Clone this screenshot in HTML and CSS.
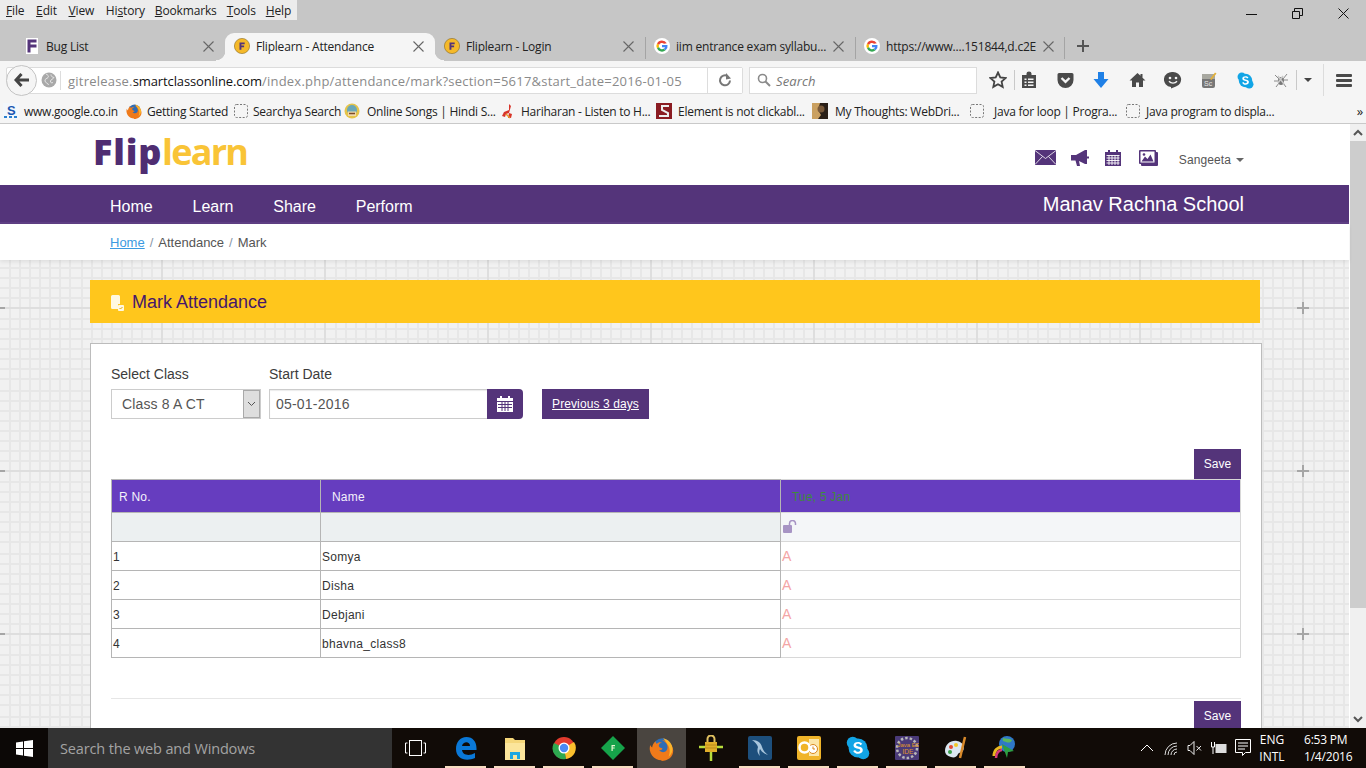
FILE: index.html
```html
<!DOCTYPE html>
<html>
<head>
  <meta charset="UTF-8">
  <title>Fliplearn - Attendance</title>
  <link rel="stylesheet" href="styles.css">
</head>
<body>
  <svg class="sprites" width="0" height="0">
    <defs>
      <symbol id="i-x" viewBox="0 0 11 11">
        <path d="M.5.500l10 10M10.500.500l-10 10" stroke="#666" stroke-width="1.100" fill="none"/>
      </symbol>
      <symbol id="i-f" viewBox="0 0 16 16">
        <circle cx="8" cy="8" r="7.600" fill="#f5b92a" stroke="#8a6a1c" stroke-width=".6"/>
        <path d="M5.500 4.500h5.200v1.800H7.400v1.300h2.700v1.700H7.400v2.400H5.500z" fill="#54347a"/>
      </symbol>
      <symbol id="i-g" viewBox="0 0 16 16">
        <circle cx="8" cy="8" r="8" fill="#fff"/>
        <path d="M12.800 5.200A5.600 5.600 0 0 0 3 5.400l2 1.500a3.200 3.200 0 0 1 5-1.200z" fill="#ea4335"/>
        <path d="M3 5.400a5.600 5.600 0 0 0 0 5.200l2-1.500a3.200 3.200 0 0 1 0-2.200z" fill="#fbbc05"/>
        <path d="M3 10.600a5.600 5.600 0 0 0 8.600 1.700L9.700 10.800A3.200 3.200 0 0 1 5 9.100z" fill="#34a853"/>
        <path d="M11.600 12.300A5.600 5.600 0 0 0 13.500 7H8v2.200h3a2.600 2.600 0 0 1-1.300 1.600z" fill="#4285f4"/>
      </symbol>
      <symbol id="i-dash" viewBox="0 0 16 16">
        <rect x="1.500" y="1.500" width="13" height="13" rx="2" fill="none" stroke="#777" stroke-dasharray="2 1.500"/>
      </symbol>
      <symbol id="i-fox" viewBox="0 0 16 16">
        <circle cx="8.500" cy="7.500" r="6" fill="#2f6db5"/>
        <path d="M8 15.500A7.500 7.500 0 0 1 .8 5.800c.3.800.7 1.300 1.200 1.600C2.200 5.800 3 4.300 4.300 3.300c-.1.800.1 1.300.6 1.700C6 3.800 7.300 3.700 8.400 4.300 7.200 4.400 6 5.200 6.300 6.500c.3 1 1.700.9 2.300 1.500-.2 1-1.300 1.200-2 1 .9 1.600 3.400 1.800 4.600.3 1-1.400.8-3.400-.3-4.800-.6-.8-1.600-1.700-2.900-2 3.300.1 7.500 2.700 7.500 7 0 4-3.400 6.500-7.500 6.500z" fill="#ef7a1a"/>
        <path d="M9 1.500c3 .6 5.500 2.800 6 6 .3 2.600-1 4.600-2.500 5.800 1.300-3 .9-5.800-.9-8.300C10.800 3.800 10 2.500 9 1.500z" fill="#fcb42a"/>
      </symbol>
      <symbol id="i-skype" viewBox="0 0 16 16">
        <circle cx="4.500" cy="4.500" r="4" fill="#12a5e6"/>
        <circle cx="11.500" cy="11.500" r="4" fill="#12a5e6"/>
        <circle cx="8" cy="8" r="6.300" fill="#12a5e6"/>
        <path d="M10.800 5.400C10.200 4.300 9 4 8 4 6.400 4 5 4.800 5 6.200c0 2.900 4.500 1.700 4.500 3.300 0 .6-.7 1-1.500 1-1 0-1.500-.4-1.900-1.200l-1.300.7c.6 1.200 1.800 1.900 3.300 1.900 1.700 0 3.100-.8 3.100-2.500 0-3-4.500-1.900-4.500-3.400 0-.5.600-.8 1.300-.8.800 0 1.200.3 1.500.9z" fill="#fff"/>
      </symbol>
    </defs>
  </svg>

  <header class="browser">
    <div class="title-row">
      <nav class="menu-bar">
        <span><u>F</u>ile</span><span><u>E</u>dit</span><span><u>V</u>iew</span><span>Hi<u>s</u>tory</span><span><u>B</u>ookmarks</span><span><u>T</u>ools</span><span><u>H</u>elp</span>
      </nav>
      <div class="win-controls">
        <svg width="11" height="11" viewBox="0 0 11 11"><path d="M0 6.500h11" stroke="#111" fill="none"/></svg>
        <svg width="11" height="11" viewBox="0 0 11 11"><path d="M.5 3.500h7v7h-7zM2.500 3.500v-3h8v7h-3" stroke="#111" fill="none"/></svg>
        <svg width="11" height="11" viewBox="0 0 11 11"><path d="M.5.500l10 10M10.500.500l-10 10" stroke="#111" fill="none"/></svg>
      </div>
    </div>

    <div class="tab-row">
      <div class="tab">
        <svg class="fav" viewBox="0 0 16 16"><rect x="2" width="12" height="16" fill="#fff"/><path d="M3.500 1.500h9v3H6.500v2h6v3h-6v5h-3z" fill="#54347a"/></svg>
        <span class="tab-title">Bug List</span><svg class="tab-close"><use href="#i-x"/></svg>
      </div>
      <div class="tab tab-active">
        <svg class="fav"><use href="#i-f"/></svg>
        <span class="tab-title">Fliplearn - Attendance</span><svg class="tab-close"><use href="#i-x"/></svg>
      </div>
      <div class="tab tab-sep">
        <svg class="fav"><use href="#i-f"/></svg>
        <span class="tab-title">Fliplearn - Login</span><svg class="tab-close"><use href="#i-x"/></svg>
      </div>
      <div class="tab tab-sep">
        <svg class="fav"><use href="#i-g"/></svg>
        <span class="tab-title">iim entrance exam syllabu...</span><svg class="tab-close"><use href="#i-x"/></svg>
      </div>
      <div class="tab tab-sep">
        <svg class="fav"><use href="#i-g"/></svg>
        <span class="tab-title">https://www....151844,d.c2E</span><svg class="tab-close"><use href="#i-x"/></svg>
      </div>
      <svg class="new-tab" width="14" height="14" viewBox="0 0 14 14"><path d="M7 1v12M1 7h12" stroke="#555" stroke-width="2" fill="none"/></svg>
    </div>

    <div class="nav-row">
      <div class="url-bar">
        <span class="back-btn">
          <svg width="16" height="14" viewBox="0 0 16 14"><path d="M7.500 1L2 7l5.500 6M2.500 7H15" stroke="#444" stroke-width="3" fill="none"/></svg>
        </span>
        <svg class="globe" width="16" height="16" viewBox="0 0 16 16"><circle cx="8" cy="8" r="7.500" fill="#a9a9a9"/><path d="M5 2c2 1 3 2 2 3.500S3.500 6.500 4 9s3 1.500 3.500 4M10 2.500c0 2 1 2.500 3 3-1 2-3 1.500-3.500 3.500s1.500 2 2.500 1.500" stroke="#e6e6e6" fill="none"/></svg>
        <span class="url"><span class="url-dim">gitrelease.</span><span class="url-host">smartclassonline.com</span><span class="url-dim">/index.php/attendance/mark?section=5617&amp;start_date=2016-01-05</span></span>
        <span class="reload">
          <svg width="14" height="14" viewBox="0 0 14 14"><path d="M12 7.500A5 5 0 1 1 9.500 3" stroke="#777" stroke-width="2" fill="none"/><path d="M8 0v6.500l5-1z" fill="#777"/></svg>
        </span>
      </div>
      <div class="search-bar">
        <svg width="14" height="14" viewBox="0 0 14 14"><circle cx="5.500" cy="5.500" r="4" stroke="#8a8a8a" stroke-width="1.600" fill="none"/><path d="M8.500 8.500l4.500 4.500" stroke="#8a8a8a" stroke-width="2"/></svg>
        <span class="search-label">Search</span>
      </div>
      <div class="tools">
        <span class="tool"><svg width="18" height="18" viewBox="0 0 18 18"><path d="M9 1.500l2.300 5 5.200.6-3.900 3.500 1.100 5.300L9 13.200l-4.700 2.700 1.100-5.300L1.500 7.100l5.200-.6z" stroke="#444" stroke-width="1.800" fill="none"/></svg></span>
        <span class="tool-sep"></span>
        <span class="tool"><svg width="16" height="18" viewBox="0 0 16 18"><path d="M1 4h4.500V2.500a2.500 2 0 0 1 5 0V4H15v13H1z" fill="#4a4a4a"/><path d="M3.500 7.500h2v1.500h-2zM7 7.500h5.500v1.500H7zM3.500 10.500h2V12h-2zM7 10.500h5.500V12H7zM3.500 13.500h2V15h-2zM7 13.500h5.500V15H7z" fill="#f5f5f5"/></svg></span>
        <span class="tool"><svg width="17" height="16" viewBox="0 0 17 16"><path d="M2 1h13a1.500 1.500 0 0 1 1.500 1.500V8a8 8 0 0 1-16 0V2.500A1.500 1.500 0 0 1 2 1z" fill="#4a4a4a"/><path d="M4.500 6l4 3.800 4-3.800" stroke="#f5f5f5" stroke-width="2.400" fill="none"/></svg></span>
        <span class="tool"><svg width="16" height="18" viewBox="0 0 16 18"><path d="M5 1h6v7h4.500L8 17 .5 8H5z" fill="#1f80e6"/></svg></span>
        <span class="tool"><svg width="17" height="16" viewBox="0 0 17 16"><path d="M8.500 1L.5 8.500H3V15h4v-4.500h3V15h4V8.500h2.500L13.500 5.700V2h-2v1.800z" fill="#4a4a4a"/></svg></span>
        <span class="tool"><svg width="18" height="18" viewBox="0 0 18 18"><path d="M9 1a8 7.500 0 0 1 3 14.500L7 17.500V16A8 7.500 0 0 1 9 1z" fill="#4a4a4a"/><circle cx="6" cy="7" r="1.300" fill="#f5f5f5"/><circle cx="12" cy="7" r="1.300" fill="#f5f5f5"/><path d="M5 10.300c2 2.400 6 2.400 8 0" stroke="#f5f5f5" stroke-width="1.400" fill="none"/></svg></span>
        <span class="tool"><svg width="16" height="18" viewBox="0 0 16 18"><rect x="1" y="3" width="13" height="14" rx="2" fill="#777"/><rect x="1" y="3" width="13" height="5" fill="#a8a8a0"/><path d="M9 8l5-6.500 1.500 1L10.500 9z" fill="#e3b23c"/><text x="3" y="15" font-size="7" font-family="Liberation Sans" fill="#e8e8e8">Sc</text></svg></span>
        <span class="tool"><svg width="17" height="17"><use href="#i-skype"/></svg></span>
        <span class="tool"><svg width="16" height="16" viewBox="0 0 16 16"><ellipse cx="8" cy="9" rx="3" ry="4" fill="#777"/><path d="M2 3l4 4M14 2l-4 5M1 9h4M15 8h-4M3 15l3-4M13 15l-3-4" stroke="#8a8a8a"/><path d="M5 4l6 8M10 4l-5 7" stroke="#c9c9c9" stroke-width="1.500"/></svg></span>
        <span class="tool-sep tool-sep-b"></span>
        <span class="caret-tool"></span>
        <span class="tool-sep tool-sep-c"></span>
        <span class="burger"><i></i><i></i><i></i></span>
      </div>
    </div>

    <div class="bookmarks">
      <span class="bm bm-1">
        <svg class="fav" viewBox="0 0 16 16"><rect width="16" height="16" fill="#f3f7fb"/><text x="4" y="12" font-size="13" font-weight="700" font-family="Liberation Sans" fill="#1a56b0">S</text><path d="M1 14h3M6 14h3M11 14h3" stroke="#2a80d0" stroke-width="2"/></svg>
        www.google.co.in</span>
      <span class="bm bm-2"><svg class="fav"><use href="#i-fox"/></svg>Getting Started</span>
      <span class="bm bm-3"><svg class="fav"><use href="#i-dash"/></svg>Searchya Search</span>
      <span class="bm bm-4">
        <svg class="fav" viewBox="0 0 16 16"><circle cx="8" cy="8" r="7.500" fill="#e5c44a"/><circle cx="8" cy="7" r="5" fill="#6aa8b8"/><path d="M4 8.500h8V13H4z" fill="#f1d9a8"/><path d="M5 10.500h6" stroke="#7b4a2a" stroke-width="1.500"/></svg>
        Online Songs | Hindi S...</span>
      <span class="bm bm-5">
        <svg class="fav" viewBox="0 0 16 16"><path d="M9 1l2 2-2 7 3 1-1 4H8l1-5-3 1-1 3-3-1 2-4 5-2z" fill="#d8352a"/><path d="M6 11l4 4" stroke="#e89a2a" stroke-width="1.500"/></svg>
        Hariharan - Listen to H...</span>
      <span class="bm bm-6">
        <svg class="fav" viewBox="0 0 16 16"><rect width="16" height="16" fill="#8b1c22"/><path d="M13 3H6v4l6 3v3H3" stroke="#eee" stroke-width="2" fill="none"/></svg>
        Element is not clickabl...</span>
      <span class="bm bm-7">
        <svg class="fav" viewBox="0 0 16 16"><rect width="16" height="16" fill="#2a2018"/><path d="M0 0h8l-2 7 3 5-3 4H0z" fill="#caa060"/><circle cx="9" cy="6" r="3.500" fill="#7a5a3a"/></svg>
        My Thoughts: WebDri...</span>
      <span class="bm bm-8"><svg class="fav"><use href="#i-dash"/></svg>Java for loop | Progra...</span>
      <span class="bm bm-9"><svg class="fav"><use href="#i-dash"/></svg>Java program to displa...</span>
      <span class="bm-more">&raquo;</span>
    </div>
  </header>

  <div class="viewport">
    <div class="page">
      <div class="site-head">
        <div class="logo"><span class="logo-flip">Flip</span><span class="logo-learn">learn</span></div>
        <div class="head-tools">
          <svg width="21" height="15" viewBox="0 0 21 15"><path d="M0 0h21v15H0z" fill="#54347a"/><path d="M0 .5l10.500 8 10.500-8M0 14.500l7.500-8M21 14.500l-7.500-8" stroke="#fff" stroke-width=".8" fill="none"/></svg>
          <svg width="19" height="16" viewBox="0 0 19 16"><path d="M0 5h5l9-5h2v6.500h2v2h-2V14h-2L8 11l1 5H6l-1.500-5.500H0z" fill="#54347a"/></svg>
          <svg width="16" height="16" viewBox="0 0 16 16"><path d="M0 2h3V0h2v2h6V0h2v2h3v14H0z" fill="#54347a"/><path d="M1.500 5.500h13M1.500 8h13M1.500 10.500h13M1.500 13h13M4 5v10M7 5v10M10 5v10M13 5v10" stroke="#fff" stroke-width=".9"/></svg>
          <svg class="head-pic" width="19" height="16" viewBox="0 0 19 16"><path d="M1 0h15a1 1 0 0 1 1 1v1h1a1 1 0 0 1 1 1v12a1 1 0 0 1-1 1H3a1 1 0 0 1-1-1v-1H1a1 1 0 0 1-1-1V1a1 1 0 0 1 1-1z" fill="#54347a"/><rect x="1.500" y="1.500" width="14" height="11" fill="#fff"/><path d="M2.500 11.500l3.500-5 2.500 2.500 3-4.500 3 7z" fill="#54347a"/><circle cx="5" cy="4.500" r="1.300" fill="#54347a"/></svg>
          <span class="user">Sangeeta<i class="user-caret"></i></span>
        </div>
      </div>

      <div class="site-nav">
        <a>Home</a><a>Learn</a><a>Share</a><a>Perform</a>
        <span class="school">Manav Rachna School</span>
      </div>

      <div class="crumbs">
        <a class="crumb-home">Home</a><span class="crumb-sep">/</span><span>Attendance</span><span class="crumb-sep">/</span><span>Mark</span>
      </div>

      <main class="content">
        <div class="banner">
          <svg width="14" height="16" viewBox="0 0 14 16"><path d="M1 1.500A1.500 1.500 0 0 1 2.500 0h6A1.500 1.500 0 0 1 10 1.500V9H8v5H2.500A1.500 1.500 0 0 1 1 12.500z" fill="#fff8e0"/><rect x="8" y="10" width="6" height="6" rx="1" fill="#fff8e0"/><path d="M9.500 13l1 1 2-2" stroke="#e2a90f" fill="none"/></svg>
          <h1>Mark Attendance</h1>
        </div>

        <section class="card">
          <div class="filters">
            <div class="field field-class">
              <label>Select Class</label>
              <div class="fake-select">
                <span>Class 8 A CT</span>
                <span class="select-arrow"><svg width="9" height="6" viewBox="0 0 9 6"><path d="M1 1l3.500 3.500L8 1" stroke="#555" fill="none"/></svg></span>
              </div>
            </div>
            <div class="field field-date">
              <label>Start Date</label>
              <div class="date-group">
                <span class="date-input">05-01-2016</span>
                <span class="date-btn"><svg width="16" height="16" viewBox="0 0 16 16"><path d="M0 2h3V0h2v2h6V0h2v2h3v14H0z" fill="#fff"/><path d="M0 5.500h16M1 8.500h14M1 11.500h14M5 6v9M8 6v9M11 6v9" stroke="#54347a"/></svg></span>
              </div>
            </div>
            <a class="prev-btn">Previous 3 days</a>
          </div>

          <div class="save-row save-top"><button class="save-btn">Save</button></div>

          <table class="mark-table">
            <colgroup><col class="col-rno"><col class="col-name"><col></colgroup>
            <thead>
              <tr class="head-row"><th>R No.</th><th class="th-name">Name</th><th class="th-date">Tue, 5 Jan</th></tr>
            </thead>
            <tbody>
              <tr class="lock-row">
                <td></td><td></td>
                <td class="lock-cell"><svg width="14" height="13" viewBox="0 0 14 13"><rect y="5" width="9" height="8" rx="1" fill="#a794c4"/><path d="M6.500 5V3.500a3 3 0 0 1 6 0V5" stroke="#a794c4" stroke-width="1.500" fill="none"/></svg></td>
              </tr>
              <tr><td>1</td><td>Somya</td><td class="absent">A</td></tr>
              <tr><td>2</td><td>Disha</td><td class="absent">A</td></tr>
              <tr><td>3</td><td>Debjani</td><td class="absent">A</td></tr>
              <tr><td>4</td><td>bhavna_class8</td><td class="absent">A</td></tr>
            </tbody>
          </table>

          <hr class="rule">
          <div class="save-row"><button class="save-btn">Save</button></div>
        </section>
      </main>
    </div>

    <div class="scrollbar">
      <span class="scroll-btn"><svg width="10" height="7" viewBox="0 0 10 7"><path d="M1 6l4-4 4 4" stroke="#555" stroke-width="2" fill="none"/></svg></span>
      <span class="scroll-thumb"></span>
      <span class="scroll-track"></span>
      <span class="scroll-btn"><svg width="10" height="7" viewBox="0 0 10 7"><path d="M1 1l4 4 4-4" stroke="#555" stroke-width="2" fill="none"/></svg></span>
    </div>
  </div>

  <footer class="taskbar">
    <span class="start">
      <svg width="17" height="17" viewBox="0 0 17 17"><path d="M0 2.500L7 1.500V8H0zM8 1.300L17 0v8H8zM0 9h7v6.500L0 14.500zM8 9h9v8l-9-1.300z" fill="#fff"/></svg>
    </span>
    <span class="task-search">Search the web and Windows</span>
    <span class="task-view">
      <svg width="21" height="16" viewBox="0 0 21 16"><rect x="4.500" y=".5" width="12" height="15" stroke="#fff" fill="none"/><path d="M2.500 3H.5v10h2M18.500 3h2v10h-2" stroke="#fff" fill="none"/></svg>
    </span>
    <span class="app app-on">
      <svg width="22" height="24" viewBox="0 0 22 24"><path d="M1 13C1 6 5 1 11.500 1 18 1 22 6 21.500 14H7c.5 5 7 6.500 13 3v5c-9 4-19 1-19-9zm6-3h8c0-5-7-5-8 0z" fill="#0a78d7"/></svg>
    </span>
    <span class="app app-on">
      <svg width="24" height="24" viewBox="0 0 24 24"><path d="M2 2h8l2 2h10v20H2z" fill="#f5d77a"/><path d="M2 7h20v17H2z" fill="#fbe59b"/><path d="M7 23v-7h10v7h-3v-4h-4v4z" fill="#1ea7e1"/></svg>
    </span>
    <span class="app app-on">
      <svg width="24" height="24" viewBox="0 0 24 24"><circle cx="12" cy="12" r="11" fill="#e33b2e"/><path d="M12 12L22 6a11 11 0 0 1-8 17z" fill="#fbc02d"/><path d="M12 12l2 11A11 11 0 0 1 2 7z" fill="#2da94f"/><circle cx="12" cy="12" r="5.500" fill="#fff"/><circle cx="12" cy="12" r="4.200" fill="#4a8af4"/></svg>
    </span>
    <span class="app app-on">
      <svg width="24" height="24" viewBox="0 0 24 24"><path d="M12 0l12 12-12 12L0 12z" fill="#16a34a"/><path d="M10.500 9h3.500v1.200h-2.300v1.200h2V12.600h-2V15h-1.200z" fill="#e9f7d0"/></svg>
    </span>
    <span class="app app-focus"><svg width="25" height="25"><use href="#i-fox"/></svg></span>
    <span class="app">
      <svg width="24" height="26" viewBox="0 0 24 26"><path d="M12 12v14M0 12h24" stroke="#b8dc3c" stroke-width="2.500"/><rect x="6" y="7" width="12" height="10" fill="#e0ae2a"/><path d="M8.500 7V4a3.500 3.500 0 0 1 7 0v3" stroke="#e0c060" stroke-width="2" fill="none"/><path d="M6 10h12M6 13h12" stroke="#b88a1a"/></svg>
    </span>
    <span class="app app-on">
      <svg width="24" height="24" viewBox="0 0 24 24"><rect width="24" height="24" rx="2" fill="#1d4f7c"/><path d="M4 4c6 0 9 3 10 7 1 3 3 6 6 8-4-1-6-3-8-6-1 2-1 4 0 7-3-3-3-6-2-9C9 8 7 6 4 4z" fill="#a8c5dc"/></svg>
    </span>
    <span class="app app-on">
      <svg width="24" height="24" viewBox="0 0 24 24"><rect width="24" height="24" rx="2" fill="#f0b429"/><rect x="12" y="3" width="10" height="17" fill="#fce6a8"/><circle cx="16" cy="13" r="4.500" fill="#fff" stroke="#d9861a"/><path d="M16 10.500V13h2" stroke="#d9861a" fill="none"/><circle cx="7.500" cy="11.500" r="5" fill="none" stroke="#fff" stroke-width="2.500"/></svg>
    </span>
    <span class="app app-on"><svg width="24" height="24"><use href="#i-skype"/></svg></span>
    <span class="app app-on">
      <svg width="24" height="24" viewBox="0 0 24 24"><rect width="24" height="24" rx="1" fill="#4a3a78"/><circle cx="12" cy="12" r="10" fill="none" stroke="#b8b8b8" stroke-width="2.500" stroke-dasharray="2.500 2"/><text x="2.500" y="11" font-size="6" font-family="Liberation Sans" fill="#e09a2a">Java EE</text><text x="7.500" y="18" font-size="6.500" font-family="Liberation Sans" fill="#e09a2a">IDE</text></svg>
    </span>
    <span class="app app-on">
      <svg width="24" height="24" viewBox="0 0 24 24"><path d="M1 15C1 8 7 4 13 5c6 1 8 6 6 10-1 2-4 1-5 3-1 3-4 4-7 3-4-1-6-3-6-6z" fill="#dbe6f0"/><circle cx="7" cy="11" r="2" fill="#e34a33"/><circle cx="12" cy="9" r="2" fill="#f0c92a"/><circle cx="6" cy="16" r="2" fill="#3aa04a"/><path d="M21 1l-5 21" stroke="#d98a2a" stroke-width="2.500"/></svg>
    </span>
    <span class="app app-on">
      <svg width="26" height="26" viewBox="0 0 26 26"><circle cx="15" cy="9" r="8" fill="#2f78c8"/><path d="M11 3c3 1 6 0 9 2-1 3-4 3-6 2s-4 0-3-4z" fill="#5cb85c"/><path d="M2 21c0-6 4-9 8-9" stroke="#e8b820" stroke-width="3" fill="none"/><path d="M4 23c0-5 3-8 6-8" stroke="#d83a7a" stroke-width="2.500" fill="none"/><path d="M10 9l12 7-6 1-1 6z" fill="#2ea043"/></svg>
    </span>

    <div class="tray">
      <svg width="14" height="8" viewBox="0 0 14 8"><path d="M1 7l6-6 6 6" stroke="#fff" fill="none"/></svg>
      <svg width="14" height="15" viewBox="0 0 14 15"><path d="M1 14a12 12 0 0 1 12-12M4 14a9 9 0 0 1 9-9M7 14a6 6 0 0 1 6-6M10 14a3 3 0 0 1 3-3" stroke="#ddd" fill="none"/></svg>
      <svg width="15" height="14" viewBox="0 0 15 14"><path d="M.5 4.500h2l4-4v13l-4-4h-2z" stroke="#eee" fill="none"/><path d="M9 5l4.500 4.500M13.500 5L9 9.500" stroke="#eee"/></svg>
      <svg width="17" height="15" viewBox="0 0 17 15"><rect x="5" y="3" width="11" height="9" fill="#ddd"/><path d="M1 1v5h3V1M2.500 6v7" stroke="#fff" fill="none"/></svg>
      <svg width="16" height="18" viewBox="0 0 16 18"><path d="M.5.500h15v13h-5l-3 3v-3H.5zM3 4h10M3 7h10M3 10h7" stroke="#fff" fill="none"/></svg>
      <span class="lang">ENG<br>INTL</span>
      <span class="clock">6:53 PM<br>1/4/2016</span>
    </div>
  </footer>
</body>
</html>
```

FILE: styles.css
```css
* {
  box-sizing: border-box;
}
html, body {
  height: 100%;
}
body {
  margin: 0;
  width: 1366px;
  height: 768px;
  overflow: hidden;
  display: flex;
  flex-direction: column;
  font-family: "Liberation Sans", Arial, sans-serif;
  background: #fff;
}
.sprites {
  display: block;
  height: 0;
}

/* browser chrome */
.browser {
  height: 124px;
  flex: none;
  background: #c6c6c6;
  font-family: "Open Sans", sans-serif;
  font-size: 12px;
  color: #222;
}
.title-row {
  height: 33px;
  display: flex;
  justify-content: space-between;
  align-items: flex-start;
}
.menu-bar {
  height: 20px;
  width: 297px;
  background: #ececec;
  display: flex;
  align-items: center;
  gap: 10px;
  padding-left: 6px;
  letter-spacing: -.15px;
}
.menu-bar span:nth-child(-n+3) {
  margin-right: 1.700px;
}
.win-controls {
  display: flex;
  gap: 35px;
  padding: 8px 17px 0 0;
}
.tab-row {
  height: 28px;
  display: flex;
  padding-left: 15px;
  align-items: stretch;
}
.tab {
  width: 210px;
  display: flex;
  align-items: center;
  padding: 0 11px 2px 9px;
  position: relative;
  letter-spacing: -.2px;
}
.tab-active {
  background: #f5f5f5;
  border-radius: 9px 9px 0 0;
}
.tab-active::before, .tab-active::after {
  content: "";
  position: absolute;
  bottom: 0;
  width: 9px;
  height: 10px;
}
.tab-active::before {
  left: -9px;
  background: radial-gradient(circle at 0 0, transparent 9px, #f5f5f5 9.500px);
}
.tab-active::after {
  right: -9px;
  background: radial-gradient(circle at 100% 0, transparent 9px, #f5f5f5 9.500px);
}
.tab-sep + .tab-sep::before {
  content: "";
  position: absolute;
  left: 0;
  top: 4px;
  bottom: 2px;
  width: 1px;
  background: #a4a4a4;
}
.tab-sep:last-of-type::after {
  content: "";
  position: absolute;
  right: 0;
  top: 4px;
  bottom: 2px;
  width: 1px;
  background: #a4a4a4;
}
.fav {
  width: 16px;
  height: 16px;
  flex: none;
}
.tab-title {
  margin-left: 6px;
  flex: 1;
  white-space: nowrap;
  overflow: hidden;
}
.tab-close {
  width: 11px;
  height: 11px;
  flex: none;
}
.new-tab {
  align-self: center;
  margin: 0 0 2px 11px;
}
.nav-row {
  height: 35px;
  background: #f5f5f5;
  padding-top: 3px;
  display: flex;
  align-items: center;
}
.url-bar {
  width: 737px;
  height: 27px;
  margin-left: 6px;
  display: flex;
  align-items: center;
  background: #fff;
  border: 1px solid #dcdcdc;
  border-radius: 2px 2px 2px 13px;
  font-size: 13px;
}
.back-btn {
  width: 31px;
  height: 31px;
  margin-left: -1px;
  flex: none;
  border: 1px solid #c4c4c4;
  border-radius: 50%;
  background: #f5f5f5;
  display: flex;
  align-items: center;
  justify-content: center;
}
.globe {
  margin-left: 4px;
  flex: none;
}
.url {
  flex: 1;
  margin-left: 3px;
  padding: 1px 0 0 7px;
  border-left: 1px solid #ddd;
  white-space: nowrap;
  color: #111;
}
.url-host {
  letter-spacing: -.12px;
}
.url-dim {
  color: #8a8a8a;
  letter-spacing: .22px;
}
.reload {
  width: 35px;
  height: 25px;
  flex: none;
  display: flex;
  align-items: center;
  justify-content: center;
  background: #fff;
  border-left: 1px solid #ddd;
}
.search-bar {
  width: 228px;
  height: 27px;
  margin-left: 6px;
  padding-left: 7px;
  display: flex;
  align-items: center;
  gap: 5px;
  background: #fff;
  border: 1px solid #dcdcdc;
  font-style: italic;
  font-size: 13px;
  letter-spacing: .1px;
  color: #777;
}
.search-label {
  padding-top: 1px;
}
.tools {
  flex: 1;
  height: 100%;
  padding-left: 12px;
  display: flex;
  align-items: center;
}
.tool {
  width: 36px;
  display: flex;
  justify-content: center;
  flex: none;
}
.tools .tool:first-child {
  width: 18px;
}
.tool-sep {
  width: 1px;
  height: 20px;
  margin: 0 5px 0 7px;
  background: #c9c9c9;
  flex: none;
}
.tool-sep + .tool {
  width: 18px;
  margin-right: 9px;
}
.tool-sep-b {
  margin: 0 7px 0 -3px;
}
.caret-tool {
  width: 0;
  height: 0;
  border: 4px solid transparent;
  border-top: 4px solid #444;
  border-bottom: 0;
  flex: none;
}
.tool-sep-c {
  height: 32px;
  margin: 0 12px 0 11px;
  background: #dcdcdc;
}
.burger {
  display: flex;
  flex-direction: column;
  gap: 2px;
  width: 16px;
}
.burger i {
  display: block;
  height: 3px;
  background: #4a4a4a;
  border-radius: 1px;
}
.bookmarks {
  height: 28px;
  background: #f5f5f5;
  border-bottom: 1px solid #c9c9c9;
  display: flex;
  align-items: center;
  padding-top: 3px;
  letter-spacing: -.25px;
}
.bm {
  display: flex;
  align-items: center;
  gap: 5px;
  white-space: nowrap;
  flex: none;
}
.bm-1 { width: 123px; margin-left: 3px; }
.bm-2 { width: 107px; }
.bm-3 { width: 111px; gap: 4px; }
.bm-4 { width: 156px; gap: 7px; }
.bm-5 { width: 156px; }
.bm-6 { width: 156px; gap: 6px; }
.bm-7 { width: 157px; gap: 7px; }
.bm-8 { width: 156px; gap: 9px; }
.bm-9 { width: 160px; gap: 5px; }
.bm-more {
  margin-left: auto;
  padding-right: 3px;
  font-size: 13px;
}

/* page */
.viewport {
  height: 604px;
  flex: none;
  display: flex;
  overflow: hidden;
}
.page {
  width: 1349px;
  flex: none;
  background: #fff;
  display: flex;
  flex-direction: column;
}
.site-head {
  height: 61px;
  flex: none;
  padding: 0 105px 0 93px;
  display: flex;
  justify-content: space-between;
  align-items: center;
}
.logo {
  font-family: "Open Sans", sans-serif;
  font-weight: 700;
  font-size: 36px;
  line-height: 1;
  margin-top: -5px;
}
.logo-flip {
  color: #4f2d72;
  font-weight: 800;
  letter-spacing: .8px;
}
.logo-learn {
  color: #f9c437;
  letter-spacing: -1.800px;
}
.head-tools {
  display: flex;
  align-items: center;
  gap: 15px;
  margin-top: 6px;
}
.head-pic {
  margin-left: 3px;
}
.user {
  margin: 4px 0 0 6px;
  font-size: 12px;
  letter-spacing: .1px;
  color: #555;
}
.user-caret {
  display: inline-block;
  margin-left: 5px;
  vertical-align: middle;
  border: 4px solid transparent;
  border-top-color: #666;
  border-bottom: 0;
}
.site-nav {
  height: 39px;
  flex: none;
  background: #54347a;
  box-shadow: inset 0 -2px 0 #5e3f84;
  padding: 4px 105px 0 110px;
  display: flex;
  align-items: center;
  gap: 39.800px;
  color: #fff;
  font-size: 16px;
}
.school {
  margin: -4px 0 0 auto;
  font-size: 20px;
}
.crumbs {
  height: 36px;
  flex: none;
  padding: 1px 0 0 110px;
  display: flex;
  align-items: center;
  gap: 5px;
  font-size: 13px;
  color: #555;
  position: relative;
  box-shadow: 0 2px 4px rgba(0, 0, 0, .08);
}
.crumb-home {
  color: #3b9ae1;
  text-decoration: underline;
}
.crumb-sep {
  color: #8a97a8;
}
.content {
  flex: 1;
  padding: 20px 0 0 90px;
  background-color: #f1f1f1;
  background-image: url("data:image/svg+xml,%3Csvg xmlns='http://www.w3.org/2000/svg' width='163' height='163'%3E%3Cg fill='%23e7e7e7'%3E%3Crect x='0' width='2' height='163'/%3E%3Crect x='10' width='2' height='163'/%3E%3Crect x='20' width='2' height='163'/%3E%3Crect x='30' width='2' height='163'/%3E%3Crect x='40' width='2' height='163'/%3E%3Crect x='50' width='2' height='163'/%3E%3Crect x='60' width='2' height='163'/%3E%3Crect x='70' width='2' height='163'/%3E%3Crect x='91' width='2' height='163'/%3E%3Crect x='101' width='2' height='163'/%3E%3Crect x='111' width='2' height='163'/%3E%3Crect x='121' width='2' height='163'/%3E%3Crect x='131' width='2' height='163'/%3E%3Crect x='141' width='2' height='163'/%3E%3Crect x='151' width='2' height='163'/%3E%3Crect y='0' height='2' width='163'/%3E%3Crect y='10' height='2' width='163'/%3E%3Crect y='20' height='2' width='163'/%3E%3Crect y='30' height='2' width='163'/%3E%3Crect y='40' height='2' width='163'/%3E%3Crect y='50' height='2' width='163'/%3E%3Crect y='60' height='2' width='163'/%3E%3Crect y='70' height='2' width='163'/%3E%3Crect y='91' height='2' width='163'/%3E%3Crect y='101' height='2' width='163'/%3E%3Crect y='111' height='2' width='163'/%3E%3Crect y='121' height='2' width='163'/%3E%3Crect y='131' height='2' width='163'/%3E%3Crect y='141' height='2' width='163'/%3E%3Crect y='151' height='2' width='163'/%3E%3C/g%3E%3Crect x='80' width='2' height='163' fill='%23dedede'/%3E%3Crect y='80' height='2' width='163' fill='%23dedede'/%3E%3Crect x='75' y='80' width='12' height='2' fill='%23a6a6a6'/%3E%3Crect x='80' y='75' width='2' height='12' fill='%23a6a6a6'/%3E%3C/svg%3E");
  background-size: 163px 163px;
  background-position: 81px -33px;
}
.banner {
  width: 1170px;
  height: 43px;
  background: #ffc61c;
  display: flex;
  align-items: center;
  gap: 8px;
  padding: 2px 0 0 20px;
}
.banner h1 {
  margin: 0;
  font-size: 18px;
  font-weight: 400;
  color: #45186b;
}
.card {
  width: 1172px;
  height: 500px;
  margin-top: 20px;
  background: #fff;
  border: 1px solid #bcbcbc;
  padding: 0 20px;
}
.filters {
  display: flex;
  align-items: flex-end;
  height: 75px;
  color: #333;
}
.field label {
  display: block;
  font-size: 14px;
  margin-bottom: 7px;
  color: #3c3c3c;
}
.field-class {
  width: 158px;
}
.fake-select {
  width: 150px;
  height: 30px;
  border: 1px solid #ccc;
  display: flex;
  align-items: center;
  justify-content: space-between;
  padding-left: 10px;
  font-size: 14px;
  letter-spacing: .15px;
  color: #555;
}
.select-arrow {
  width: 17px;
  height: 28px;
  background: #dedede;
  border: 1px solid #a9a9a9;
  display: flex;
  align-items: center;
  justify-content: center;
}
.date-group {
  width: 254px;
  height: 30px;
  display: flex;
}
.date-input {
  flex: 1;
  border: 1px solid #ccc;
  border-right: 0;
  box-shadow: inset 0 1px 1px rgba(0, 0, 0, .08);
  padding-left: 6px;
  font-size: 14px;
  letter-spacing: .2px;
  color: #555;
  display: flex;
  align-items: center;
}
.date-btn {
  width: 36px;
  background: #54347a;
  border-radius: 0 4px 4px 0;
  display: flex;
  align-items: center;
  justify-content: center;
}
.prev-btn {
  width: 107px;
  height: 30px;
  margin-left: 19px;
  background: #54347a;
  color: #fff;
  font-size: 12px;
  letter-spacing: .1px;
  text-decoration: underline;
  display: flex;
  align-items: center;
  justify-content: center;
}
.save-row {
  display: flex;
  justify-content: flex-end;
}
.save-top {
  margin: 30px 0 -1px;
}
.save-btn {
  width: 47px;
  height: 31px;
  border: 0;
  padding: 0 0 2px;
  background: #54347a;
  color: #fff;
  font-family: inherit;
  font-size: 12px;
}
.mark-table {
  position: relative;
  width: 1130px;
  table-layout: fixed;
  border-collapse: collapse;
  font-size: 12px;
  letter-spacing: .3px;
  color: #333;
}
.col-rno {
  width: 209px;
}
.col-name {
  width: 460px;
}
.mark-table th, .mark-table td {
  border: 1px solid #b5b5b5;
  padding: 1px 0 0 1px;
  height: 29px;
  text-align: left;
}
.mark-table td:last-child, .mark-table th:last-child {
  border-color: #d8d8d8;
  border-left-color: #b5b5b5;
}
.mark-table th {
  height: 33px;
  background: #663dbf;
  color: #f4f1fb;
  font-weight: 400;
  padding: 1px 0 0 7px;
  letter-spacing: .2px;
}
.mark-table .th-name {
  padding-left: 11px;
}
.mark-table .th-date {
  padding-left: 11px;
  color: #3e8a3e;
  border-color: #b5b5b5;
}
.lock-row td {
  background: #ecf0f1;
}
.mark-table .lock-cell {
  background: #f4f6f8;
  padding-top: 0;
}
.lock-cell svg {
  display: block;
  margin: -2px 0 0 1px;
}
.mark-table .absent {
  color: #f4a5a5;
  font-size: 14px;
  padding-top: 0;
}
.rule {
  margin: 40px 0 2px;
  border: 0;
  border-top: 1px solid #e6e6e6;
}

/* scrollbar */
.scrollbar {
  width: 17px;
  flex: none;
  display: flex;
  flex-direction: column;
  background: #f0f0f0;
  border-left: 1px solid #fff;
}
.scroll-btn {
  height: 17px;
  flex: none;
  display: flex;
  align-items: center;
  justify-content: center;
}
.scroll-thumb {
  height: 467px;
  flex: none;
  background: #cdcdcd;
}
.scroll-track {
  flex: 1;
}

/* taskbar */
.taskbar {
  height: 40px;
  flex: none;
  display: flex;
  align-items: stretch;
  background: #110b07;
  color: #fff;
}
.start {
  width: 48px;
  flex: none;
  background: #0c0806;
  display: flex;
  align-items: center;
  justify-content: center;
}
.task-search {
  width: 344px;
  flex: none;
  background: #333;
  color: #a3a3a3;
  font-family: "Open Sans", sans-serif;
  font-size: 14.500px;
  letter-spacing: -.15px;
  padding-left: 12px;
  display: flex;
  align-items: center;
}
.task-view {
  width: 49px;
  flex: none;
  display: flex;
  align-items: center;
  justify-content: center;
  padding-right: 2px;
}
.app {
  width: 49px;
  flex: none;
  display: flex;
  align-items: center;
  justify-content: center;
  position: relative;
}
.app-on::after {
  content: "";
  position: absolute;
  left: 4px;
  right: 4px;
  bottom: 0;
  height: 2px;
  background: #f6dcc0;
}
.app-focus {
  background: #4a4540;
}
.tray {
  margin-left: auto;
  display: flex;
  align-items: center;
  padding-right: 19px;
  font-family: "Open Sans", sans-serif;
  font-size: 12px;
  line-height: 17px;
  text-align: center;
}
.tray svg {
  width: 24px;
}
.lang {
  width: 34px;
  margin-left: 0;
}
.clock {
  width: 43px;
  margin-left: 15px;
  letter-spacing: -.2px;
  white-space: nowrap;
}
```
